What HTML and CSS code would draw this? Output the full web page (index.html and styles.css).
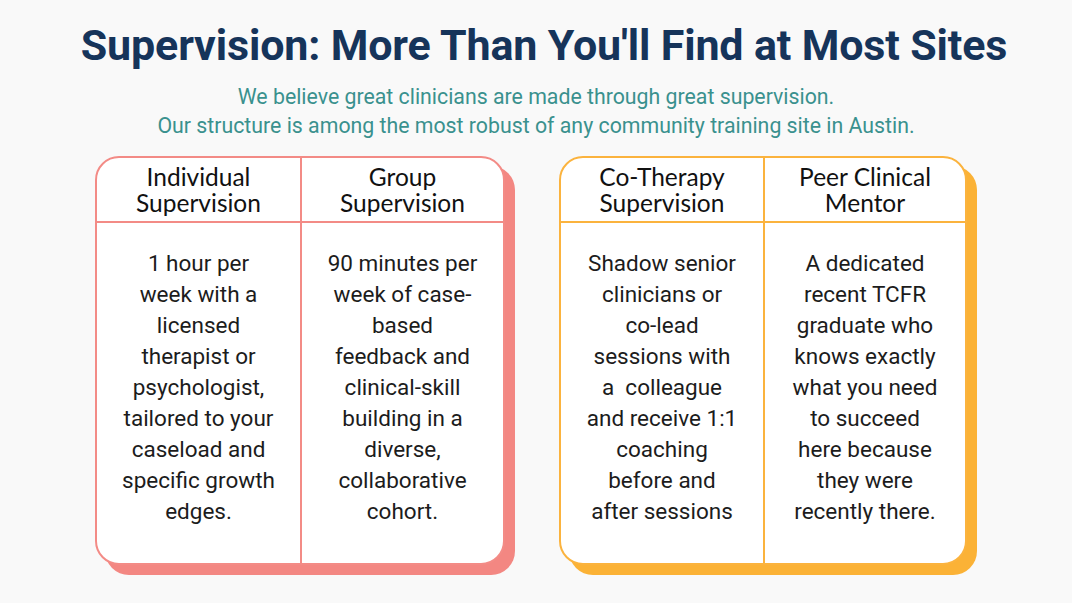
FILE: index.html
```html
<!DOCTYPE html>
<html lang="en">
<head>
<meta charset="utf-8">
<title>Supervision</title>
<link rel="stylesheet" href="styles.css">
</head>
<body>
<main class="page">
  <h1 class="title">Supervision: More Than You'll Find at Most Sites</h1>
  <p class="subtitle">We believe great clinicians are made through great supervision.<br>Our structure is among the most robust of any community training site in Austin.</p>
  <div class="cards">
    <section class="card card-coral">
      <div class="col">
        <h2 class="col-head">Individual<br>Supervision</h2>
        <p class="col-body">1 hour per<br>week with a<br>licensed<br>therapist or<br>psychologist,<br>tailored to your<br>caseload and<br>specific growth<br>edges.</p>
      </div>
      <div class="col">
        <h2 class="col-head">Group<br>Supervision</h2>
        <p class="col-body">90 minutes per<br>week of case-<br>based<br>feedback and<br>clinical-skill<br>building in a<br>diverse,<br>collaborative<br>cohort.</p>
      </div>
    </section>
    <section class="card card-amber">
      <div class="col">
        <h2 class="col-head">Co-Therapy<br>Supervision</h2>
        <p class="col-body">Shadow senior<br>clinicians or<br>co-lead<br>sessions with<br>a&nbsp; colleague<br>and receive 1:1<br>coaching<br>before and<br>after sessions</p>
      </div>
      <div class="col">
        <h2 class="col-head">Peer Clinical<br>Mentor</h2>
        <p class="col-body">A dedicated<br>recent TCFR<br>graduate who<br>knows exactly<br>what you need<br>to succeed<br>here because<br>they were<br>recently there.</p>
      </div>
    </section>
  </div>
</main>
</body>
</html>
```

FILE: styles.css
```css
* { box-sizing: border-box; }
html, body { margin: 0; padding: 0; }
body {
  background: #f9f9f9;
  font-family: Roboto, "Liberation Sans", sans-serif;
  width: 1072px;
  height: 603px;
  overflow: hidden;
}
.page {
  display: flex;
  flex-direction: column;
  align-items: center;
  padding-top: 19px;
}
.title {
  margin: 0 0 0 16px;
  font-family: Roboto, sans-serif;
  font-weight: 700;
  font-size: 43px;
  line-height: 52px;
  color: #16345a;
  letter-spacing: -0.15px;
}
.subtitle {
  margin: 11px 0 0;
  text-align: center;
  font-size: 21.3px;
  line-height: 29px;
  color: #3a918e;
}
.cards {
  display: flex;
  gap: 54px;
  margin-top: 16px;
  padding-right: 10px;
}
.card {
  display: grid;
  grid-template-columns: 1fr 1fr;
  width: 410px;
  height: 409px;
  background: #fff;
  border: 2px solid;
  border-radius: 24px;
  overflow: hidden;
}
.card-coral { border-color: #f38b86; box-shadow: 10px 10px 0 #f38782; }
.card-amber { border-color: #fbb33e; box-shadow: 10px 10px 0 #fbb236; width: 408px; }
.col {
  display: flex;
  flex-direction: column;
}
.col + .col { border-left: 2px solid; }
.card-coral .col + .col { border-left-color: #f38b86; }
.card-amber .col + .col { border-left-color: #fbb33e; }
.col-head {
  margin: 0;
  height: 65px;
  padding-top: 6px;
  text-align: center;
  font-family: Lato, "Open Sans", sans-serif;
  font-weight: 400;
  font-size: 24.5px;
  line-height: 26px;
  color: #111;
  border-bottom: 2px solid;
}
.card-coral .col-head { border-bottom-color: #f38b86; }
.card-amber .col-head { border-bottom-color: #fbb33e; }
.col-body {
  margin: 0;
  padding-top: 25px;
  text-align: center;
  font-size: 22.5px;
  line-height: 31px;
  color: #1c1c1c;
}
```
